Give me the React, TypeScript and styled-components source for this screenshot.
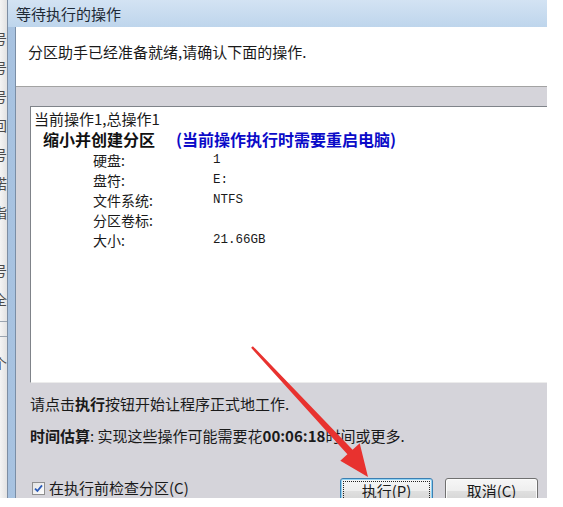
import React from 'react'
import styled, { createGlobalStyle } from 'styled-components'

const GlobalStyle = createGlobalStyle`
  html, body {
    margin: 0;
    padding: 0;
    background: #ffffff;
  }
  body {
    font-family: "Noto Sans CJK SC", "Noto Sans", sans-serif;
    color: #1a1a1a;
  }
`

const Screen = styled.div`
  position: relative;
  width: 547px;
  height: 498px;
  display: flex;
  overflow: hidden;
`

const BackWindow = styled.div`
  width: 7px;
  flex-shrink: 0;
  background: linear-gradient(to right, #f4f4f4, #e2e2e2);
  border-right: 1px solid #7d8ea3;
  overflow: hidden;
  display: flex;
  flex-direction: column;
  padding-top: 30px;
`

const BackGlyph = styled.span<{ $gap?: number }>`
  display: block;
  margin-left: -7px;
  margin-top: ${(p) => p.$gap ?? 12}px;
  font-size: 14px;
  line-height: 16px;
  color: #4a4a4a;
  white-space: nowrap;
`

const BackRule = styled.div`
  height: 1px;
  margin-top: 14px;
  background: #9aa4b0;
`

const Window = styled.div`
  flex: 1;
  display: flex;
  flex-direction: column;
  background: linear-gradient(to right, #a7c2e0, #cfe0f2 60%, #b9d0ea);
`

const TitleBar = styled.div`
  height: 27px;
  flex-shrink: 0;
  display: flex;
  align-items: center;
  padding-left: 8px;
  font-size: 15px;
  color: #1e2a36;
  background: linear-gradient(to bottom, #d3e3f3, #bed5ec);
`

const Body = styled.div`
  flex: 1;
  display: flex;
  padding-left: 7px;
  min-height: 0;
`

const Client = styled.div`
  flex: 1;
  display: flex;
  flex-direction: column;
  border-left: 1px solid #7a8ea6;
  min-width: 0;
`

const Header = styled.div`
  height: 60px;
  flex-shrink: 0;
  box-sizing: border-box;
  padding: 15px 0 0 12px;
  background: #ffffff;
  border-bottom: 1px solid #a3a3a3;
  font-size: 15px;
  line-height: 20px;
`

const Main = styled.div`
  flex: 1;
  display: flex;
  flex-direction: column;
  padding: 19px 0 0 14px;
  background: #d5d4da;
`

const ListBox = styled.div`
  height: 277px;
  flex-shrink: 0;
  box-sizing: border-box;
  background: #ffffff;
  border-left: 1px solid #7f8389;
  border-top: 1px solid #7f8389;
  border-bottom: 1px solid #ececec;
  padding: 2px 0 0 3px;
  font-size: 14px;
  line-height: 20px;
`

const Line = styled.div`
  height: 20px;
  font-size: 15px;
  white-space: nowrap;
`

const OpTitle = styled.div`
  height: 21px;
  display: flex;
  padding-left: 9px;
  font-size: 16px;
  font-weight: 700;
  line-height: 21px;
  white-space: nowrap;
`

const OpName = styled.span`
  width: 133px;
  color: #111;
`

const OpNote = styled.span`
  color: #0b0bc8;
`

const Row = styled.div`
  display: flex;
  height: 20px;
  padding-left: 59px;
`

const Label = styled.span`
  width: 120px;
  font-size: 14px;
`

const Value = styled.span`
  font-family: "Liberation Mono", "Noto Sans CJK SC", monospace;
  font-size: 12.5px;
`

const Hint = styled.div`
  margin-top: 11px;
  font-size: 15px;
  line-height: 20px;
  white-space: nowrap;
`

const Estimate = styled(Hint)`
  margin-top: 12px;
`

const Footer = styled.div`
  margin-top: 32px;
  display: flex;
  align-items: flex-start;
  padding-right: 9px;
`

const CheckLabel = styled.label`
  flex: 1;
  display: flex;
  align-items: center;
  gap: 4px;
  margin: 3px 0 0 2px;
  font-size: 15px;
  line-height: 14px;
  white-space: nowrap;
`

const CheckBox = styled.span`
  width: 11px;
  height: 11px;
  border: 1px solid #8f8f8f;
  background: linear-gradient(135deg, #e3e3e3, #ffffff);
  display: flex;
  align-items: center;
  justify-content: center;
`

const Buttons = styled.div`
  display: flex;
  gap: 12px;
`

const Button = styled.div<{ $focused?: boolean }>`
  position: relative;
  width: 93px;
  height: 25px;
  box-sizing: border-box;
  padding-top: 2px;
  text-align: center;
  font-size: 15px;
  line-height: 19px;
  border-radius: 3px;
  border: 1px solid ${(p) => (p.$focused ? '#3c7fb1' : '#707070')};
  background: linear-gradient(
    to bottom,
    #f6f6f6 0%,
    #eeeeee 50%,
    #e0e0e0 51%,
    #d4d4d4 100%
  );
  box-shadow: inset 0 0 0 1px ${(p) => (p.$focused ? '#8fd3f5' : '#fcfcfc')};
  outline: ${(p) => (p.$focused ? '1px dotted #222' : 'none')};
  outline-offset: -4px;
`

const Key = styled.span`
  text-decoration: underline;
`

const Overlay = styled.svg`
  position: absolute;
  left: 0;
  top: 0;
  pointer-events: none;
`

const backGlyphs = ['号', '号', '号', '回', '号', '诺', '指', '亻', '号', '全']

export default function App() {
  return (
    <>
      <GlobalStyle />
      <Screen>
        <BackWindow>
          {backGlyphs.map((g, i) => (
            <BackGlyph key={i} $gap={i === 0 ? 0 : 13}>
              {g}
            </BackGlyph>
          ))}
          <BackRule />
          <BackRule />
          <BackGlyph $gap={18}>个</BackGlyph>
        </BackWindow>
        <Window>
          <TitleBar>等待执行的操作</TitleBar>
          <Body>
            <Client>
              <Header>分区助手已经准备就绪,请确认下面的操作.</Header>
              <Main>
                <ListBox>
                  <Line>当前操作1,总操作1</Line>
                  <OpTitle>
                    <OpName>缩小并创建分区</OpName>
                    <OpNote>(当前操作执行时需要重启电脑)</OpNote>
                  </OpTitle>
                  <Row>
                    <Label>硬盘:</Label>
                    <Value>1</Value>
                  </Row>
                  <Row>
                    <Label>盘符:</Label>
                    <Value>E:</Value>
                  </Row>
                  <Row>
                    <Label>文件系统:</Label>
                    <Value>NTFS</Value>
                  </Row>
                  <Row>
                    <Label>分区卷标:</Label>
                    <Value></Value>
                  </Row>
                  <Row>
                    <Label>大小:</Label>
                    <Value>21.66GB</Value>
                  </Row>
                </ListBox>
                <Hint>
                  请点击<b>执行</b>按钮开始让程序正式地工作.
                </Hint>
                <Estimate>
                  <b>时间估算</b>: 实现这些操作可能需要花<b>00:06:18</b>时间或更多.
                </Estimate>
                <Footer>
                  <CheckLabel>
                    <CheckBox>
                      <svg width="9" height="9" viewBox="0 0 9 9">
                        <path
                          d="M1 4.6 L3.4 7 L8 1.4"
                          fill="none"
                          stroke="#2a5ab8"
                          strokeWidth="1.8"
                        />
                      </svg>
                    </CheckBox>
                    在执行前检查分区(C)
                  </CheckLabel>
                  <Buttons>
                    <Button $focused>
                      执行(<Key>P</Key>)
                    </Button>
                    <Button>
                      取消(<Key>C</Key>)
                    </Button>
                  </Buttons>
                </Footer>
              </Main>
            </Client>
          </Body>
        </Window>
        <Overlay width="547" height="498" viewBox="0 0 547 498">
          <polygon
            points="251.1,347.8 347.4,454.3 340.3,460.7 368,477 359.7,443.3 352.6,449.7 252.9,346.2"
            fill="#e8322f"
          />
        </Overlay>
      </Screen>
    </>
  )
}
